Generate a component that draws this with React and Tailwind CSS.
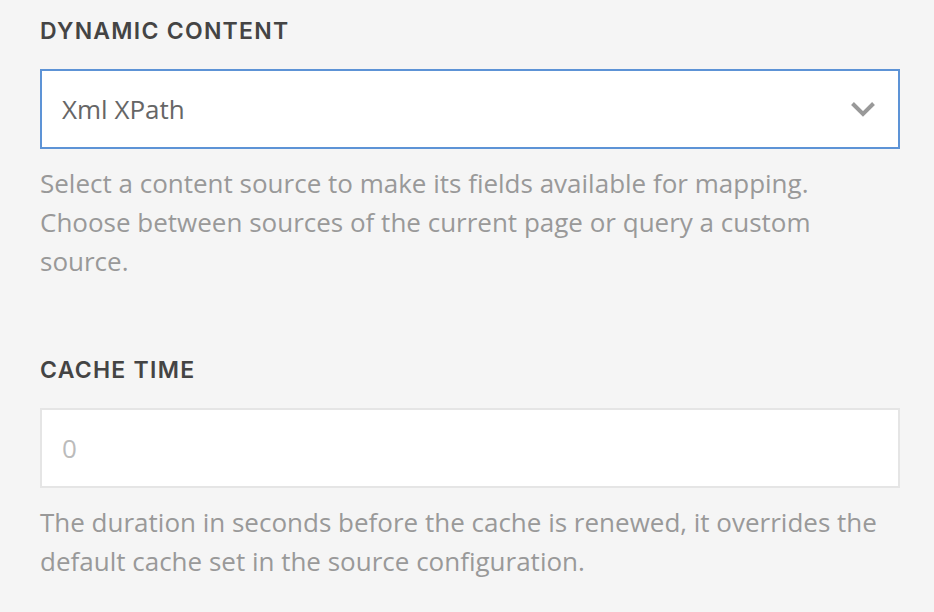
import React from "react";

function Heading({ children }) {
  return (
    <div
      className="text-[23px] leading-[24px] font-semibold uppercase text-[#444444] tracking-[0.055em]"
      style={{ fontFamily: "Inter, 'Open Sans', sans-serif" }}
    >
      {children}
    </div>
  );
}

function Help({ children }) {
  return (
    <p
      className="mt-[15px] text-[26px] leading-[39px] text-[#999999]"
      style={{ fontFamily: "'Open Sans', sans-serif" }}
    >
      {children}
    </p>
  );
}

export default function App() {
  return (
    <div
      className="w-[934px] h-[612px] bg-[#f5f5f5] pl-[40px] pr-[34px] pt-[19px] overflow-hidden"
      style={{ fontFamily: "'Open Sans', sans-serif" }}
    >
      <Heading>Dynamic Content</Heading>
      <div className="mt-[26px] h-[80px] bg-white border-2 border-[#5d93d6] flex items-center justify-between pl-[20px] pr-[22px]">
        <span className="text-[26px] text-[#666666]">Xml XPath</span>
        <svg width="26" height="16" viewBox="0 0 26 16" fill="none">
          <polyline
            points="2.5,2.5 13,13 23.5,2.5"
            stroke="#999999"
            strokeWidth="4"
            strokeLinecap="butt"
            strokeLinejoin="miter"
          />
        </svg>
      </div>
      <Help>
        Select a content source to make its fields available for mapping.
        Choose between sources of the current page or query a custom source.
      </Help>

      <div className="mt-[77px]">
        <Heading>Cache Time</Heading>
      </div>
      <div className="mt-[26px] h-[80px] bg-white border-2 border-[#e5e5e5] flex items-center pl-[20px]">
        <span className="text-[26px] text-[#bbbbbb]">0</span>
      </div>
      <Help>
        The duration in seconds before the cache is renewed, it overrides the
        default cache set in the source configuration.
      </Help>
    </div>
  );
}
